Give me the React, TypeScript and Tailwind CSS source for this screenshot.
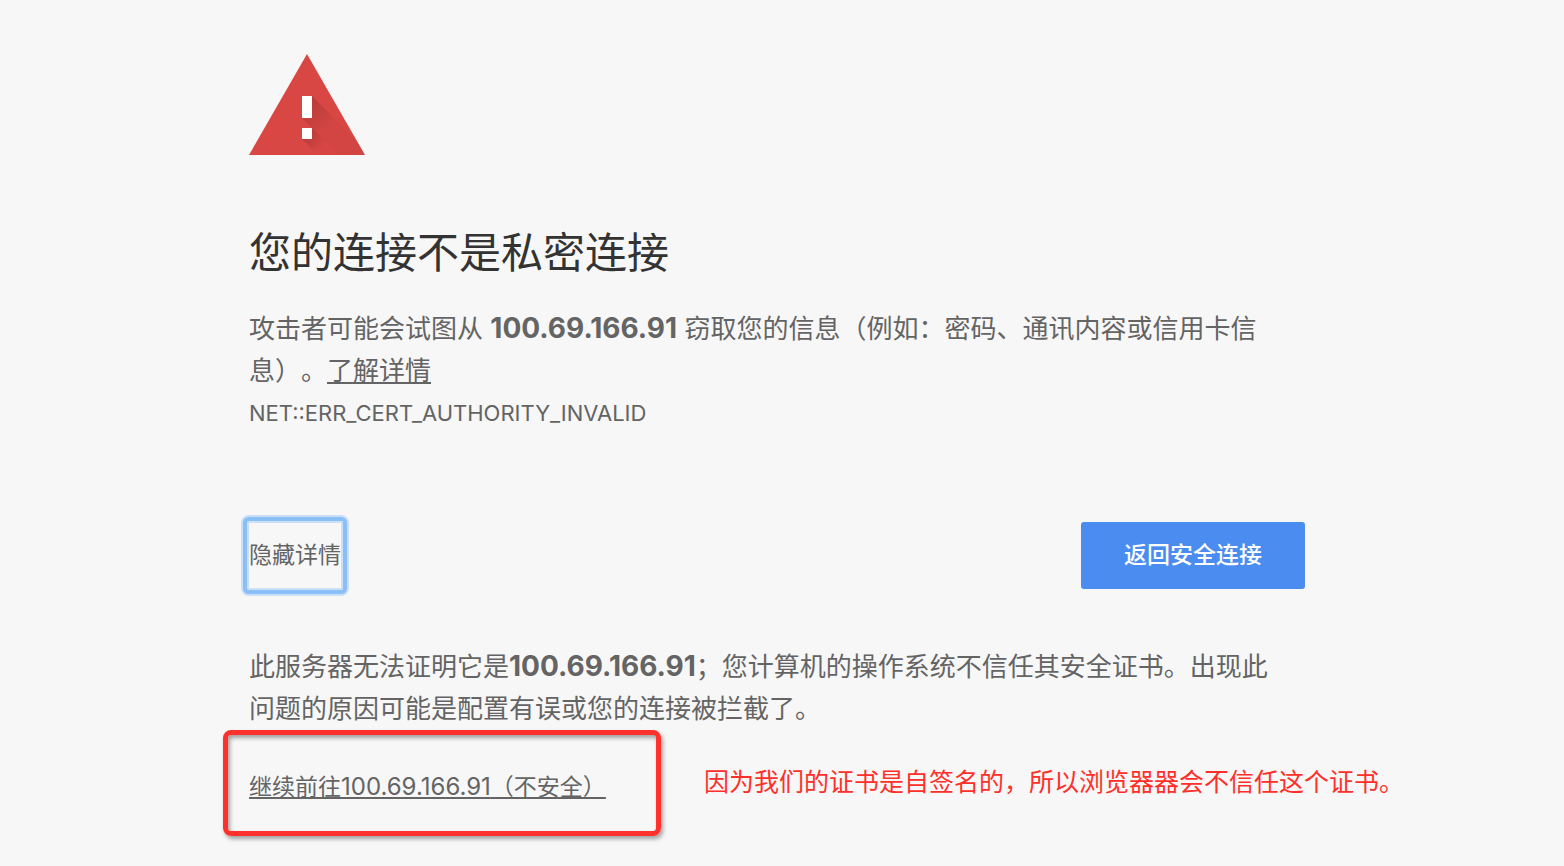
const HOST = "100.69.166.91";

const WarningIcon = () => {
  return (
    <svg
      width={116}
      height={101}
      viewBox="0 0 116 101"
      role="img"
      aria-label="警告"
    >
      <defs>
        <linearGradient
          id="barShade"
          gradientUnits="userSpaceOnUse"
          x1="56"
          y1="56"
          x2="76"
          y2="76"
        >
          <stop offset="0" stopColor="#000" stopOpacity="0.14" />
          <stop offset="1" stopColor="#000" stopOpacity="0.03" />
        </linearGradient>
        <linearGradient
          id="dotShade"
          gradientUnits="userSpaceOnUse"
          x1="57"
          y1="80"
          x2="72"
          y2="95"
        >
          <stop offset="0" stopColor="#000" stopOpacity="0.16" />
          <stop offset="1" stopColor="#000" stopOpacity="0.01" />
        </linearGradient>
        <clipPath id="triangle">
          <path d="M58 0 L116 101 H0 Z" />
        </clipPath>
      </defs>
      <path d="M58 0 L116 101 H0 Z" fill="#d94744" />
      <g clipPath="url(#triangle)">
        <path d="M63 42 L122 101 H90 L53 64 Z" fill="url(#barShade)" />
        <path d="M63 74 L90 101 H69 L53 85 Z" fill="url(#dotShade)" />
      </g>
      <rect x="53" y="42" width="10" height="22" fill="#fff" />
      <rect x="53" y="74" width="10" height="11" fill="#fff" />
    </svg>
  );
};

const Host = () => {
  return <strong className="text-[28px] leading-none font-bold">{HOST}</strong>;
};

const Actions = () => {
  return (
    <div className="mt-[87px] flex items-center justify-between">
      <button
        type="button"
        className="-ml-0.5 h-[69px] rounded-xs px-0.5 text-[23px] ring-4 inset-ring-2 ring-[#8abff8] inset-ring-[#8abff8]/40 outline-2 outline-offset-4 outline-[#8abff8]/40"
      >
        隐藏详情
      </button>
      <button
        type="button"
        className="h-[67px] rounded-[3px] bg-[#4a8cf0] px-[43px] text-[23px] font-medium text-white"
      >
        返回安全连接
      </button>
    </div>
  );
};

const ProceedNote = () => {
  return (
    <div className="-ml-[26px] flex items-center gap-[43px]">
      <div className="flex h-[106px] w-[438px] shrink-0 items-center rounded-lg border-5 border-[#ff312c] pt-2 pl-[21px] shadow-[2px_3px_4px_rgba(0,0,0,0.35),inset_2px_3px_4px_rgba(0,0,0,0.35)]">
        <a
          href="#proceed"
          className="text-[23px] whitespace-nowrap underline decoration-2 underline-offset-2 [text-decoration-skip-ink:none]"
        >
          继续前往<span className="text-[24px]">{HOST}</span>（不安全）
        </a>
      </div>
      <p className="text-[25px] whitespace-nowrap text-[#ff2f2a]">
        因为我们的证书是自签名的，所以浏览器器会不信任这个证书。
      </p>
    </div>
  );
};

export default function App() {
  return (
    <div
      lang="zh-CN"
      className="min-h-screen bg-[#f7f7f7] pt-[54px] pr-[34px] pb-6 pl-6 font-['Inter','Noto_Sans_CJK_SC',sans-serif] text-[#646464] [text-spacing-trim:space-all]"
    >
      <main className="mx-auto max-w-[1056px]">
        <WarningIcon />
        <h1 className="mt-[67px] text-[42px] leading-[62px] text-[#333]">
          您的连接不是私密连接
        </h1>
        <p className="mt-6 pr-5 text-[26px] leading-[42px]">
          攻击者可能会试图从 <Host /> 窃取您的信息（例如：密码、通讯内容或信用卡信息）。
          <a
            href="#details"
            className="underline decoration-2 underline-offset-2 [text-decoration-skip-ink:none]"
          >
            了解详情
          </a>
        </p>
        <p className="text-[22px] leading-[42px]">
          NET::ERR_CERT_AUTHORITY_INVALID
        </p>
        <Actions />
        <p className="mt-14 pr-5 text-[26px] leading-[42px]">
          此服务器无法证明它是
          <Host />
          ；您计算机的操作系统不信任其安全证书。出现此问题的原因可能是配置有误或您的连接被拦截了。
        </p>
        <ProceedNote />
      </main>
    </div>
  );
}
